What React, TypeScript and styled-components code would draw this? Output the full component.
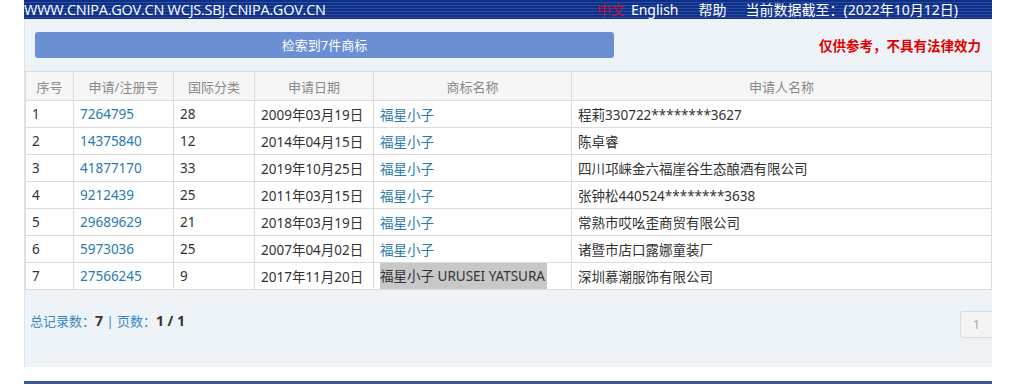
import { FC } from "react";
import styled, { createGlobalStyle } from "styled-components";

interface Row {
  no: number;
  regNo: string;
  cls: string;
  date: string;
  name: string;
  applicant: string;
  marked?: boolean;
}

const rows: Row[] = [
  { no: 1, regNo: "7264795", cls: "28", date: "2009年03月19日", name: "福星小子", applicant: "程莉330722********3627" },
  { no: 2, regNo: "14375840", cls: "12", date: "2014年04月15日", name: "福星小子", applicant: "陈卓睿" },
  { no: 3, regNo: "41877170", cls: "33", date: "2019年10月25日", name: "福星小子", applicant: "四川邛崃金六福崖谷生态酿酒有限公司" },
  { no: 4, regNo: "9212439", cls: "25", date: "2011年03月15日", name: "福星小子", applicant: "张钟松440524********3638" },
  { no: 5, regNo: "29689629", cls: "21", date: "2018年03月19日", name: "福星小子", applicant: "常熟市哎吆歪商贸有限公司" },
  { no: 6, regNo: "5973036", cls: "25", date: "2007年04月02日", name: "福星小子", applicant: "诸暨市店口露娜童装厂" },
  { no: 7, regNo: "27566245", cls: "9", date: "2017年11月20日", name: "福星小子 URUSEI YATSURA", applicant: "深圳慕潮服饰有限公司", marked: true },
];

const App: FC = () => {
  return (
    <>
      <GlobalStyle />
      <Page>
        <TopBar>
          <Domains>WWW.CNIPA.GOV.CN WCJS.SBJ.CNIPA.GOV.CN</Domains>
          <TopLinks>
            <TopLink $active>中文</TopLink>
            <TopLink>English</TopLink>
            <TopLink $gap={20}>帮助</TopLink>
            <TopLink $gap={19}>当前数据截至：(2022年10月12日)</TopLink>
          </TopLinks>
        </TopBar>
        <Panel>
          <SummaryRow>
            <CountBar>检索到7件商标</CountBar>
            <Notice>仅供参考，不具有法律效力</Notice>
          </SummaryRow>
          <Table>
            <colgroup>
              <col style={{ width: 48 }} />
              <col style={{ width: 100 }} />
              <col style={{ width: 81 }} />
              <col style={{ width: 119 }} />
              <col style={{ width: 198 }} />
              <col />
            </colgroup>
            <thead>
              <tr>
                <Th>序号</Th>
                <Th>申请/注册号</Th>
                <Th>国际分类</Th>
                <Th>申请日期</Th>
                <Th>商标名称</Th>
                <Th>申请人名称</Th>
              </tr>
            </thead>
            <tbody>
              {rows.map((r) => (
                <tr key={r.no}>
                  <Td>{r.no}</Td>
                  <Td>
                    <Link>{r.regNo}</Link>
                  </Td>
                  <Td>{r.cls}</Td>
                  <Td>{r.date}</Td>
                  <Td>{r.marked ? <Marked>{r.name}</Marked> : <Link>{r.name}</Link>}</Td>
                  <Td>{r.applicant}</Td>
                </tr>
              ))}
            </tbody>
          </Table>
          <Footer>
            <Totals>
              总记录数：<b>7</b> | 页数：<b>1 / 1</b>
            </Totals>
            <PageButton>1</PageButton>
          </Footer>
        </Panel>
        <BottomBar />
      </Page>
    </>
  );
};

export default App;

const GlobalStyle = createGlobalStyle`
  body {
    margin: 0;
    background: #ffffff;
    font-family: "Noto Sans", "Noto Sans CJK SC", sans-serif;
    color: #333;
  }
`;

const Page = styled.div`
  width: 968px;
  margin-left: 24px;
  height: 384px;
  overflow: hidden;
`;

const TopBar = styled.div`
  height: 19px;
  display: flex;
  align-items: center;
  justify-content: space-between;
  background: repeating-linear-gradient(
    to bottom,
    #0d2f86 0px,
    #0d2f86 2px,
    #2a4da3 2px,
    #2a4da3 3px
  );
  color: #fff;
`;

const Domains = styled.div`
  font-family: "Open Sans", "Noto Sans", sans-serif;
  font-size: 14.5px;
  letter-spacing: -0.25px;
  line-height: 19px;
`;

const TopLinks = styled.div`
  display: flex;
  align-items: center;
  padding-right: 34px;
`;

const TopLink = styled.span<{ $active?: boolean; $gap?: number }>`
  font-size: 14px;
  line-height: 19px;
  margin-left: ${(p) => p.$gap ?? 6}px;
  color: ${(p) => (p.$active ? "#c8102e" : "#fff")};
  font-family: "Noto Sans", "Noto Sans CJK SC", sans-serif;
`;

const Panel = styled.div`
  background: #eef3f8;
  border-left: 1px solid #dde3ea;
  height: 348px;
  padding-top: 13px;
  box-sizing: border-box;
`;

const SummaryRow = styled.div`
  display: flex;
  align-items: center;
  justify-content: space-between;
  padding: 0 11px 0 10px;
  height: 26px;
`;

const CountBar = styled.div`
  width: 579px;
  height: 26px;
  border-radius: 3px;
  background: #6a8fd3;
  color: #fff;
  font-size: 13px;
  line-height: 26px;
  text-align: center;
`;

const Notice = styled.div`
  color: #e00000;
  font-size: 13.5px;
  font-weight: bold;
`;

const Table = styled.table`
  margin-top: 13px;
  width: 967px;
  border-collapse: collapse;
  background: #fff;
  table-layout: fixed;
  font-size: 13.5px;
`;

const Th = styled.th`
  height: 28px;
  background: #f6f6f6;
  color: #8a8a8a;
  font-weight: normal;
  font-size: 13px;
  border: 1px solid #dcdcdc;
  text-align: center;
  padding: 0;
`;

const Td = styled.td`
  height: 26px;
  border: 1px solid #dcdcdc;
  padding: 0 6px;
  white-space: nowrap;
  color: #333;
`;

const Link = styled.span`
  color: #2b7bb0;
`;

const Marked = styled.span`
  display: inline-block;
  background: #c8c8c8;
  line-height: 26px;
  padding-right: 2px;
`;

const Footer = styled.div`
  display: flex;
  align-items: flex-start;
  justify-content: space-between;
  padding: 21px 0 0 5px;
`;

const Totals = styled.div`
  color: #3a87c2;
  font-size: 13px;
  line-height: 20px;
  b {
    color: #333;
    font-weight: bold;
    font-size: 14px;
  }
`;

const PageButton = styled.div`
  width: 32px;
  height: 27px;
  box-sizing: border-box;
  border: 1px solid #dcdcdc;
  border-right: none;
  border-radius: 3px 0 0 3px;
  background: #f4f4f4;
  color: #aaa;
  font-size: 13px;
  line-height: 25px;
  text-align: center;
`;

const BottomBar = styled.div`
  margin-top: 14px;
  height: 4px;
  background: #3b5a93;
`;
